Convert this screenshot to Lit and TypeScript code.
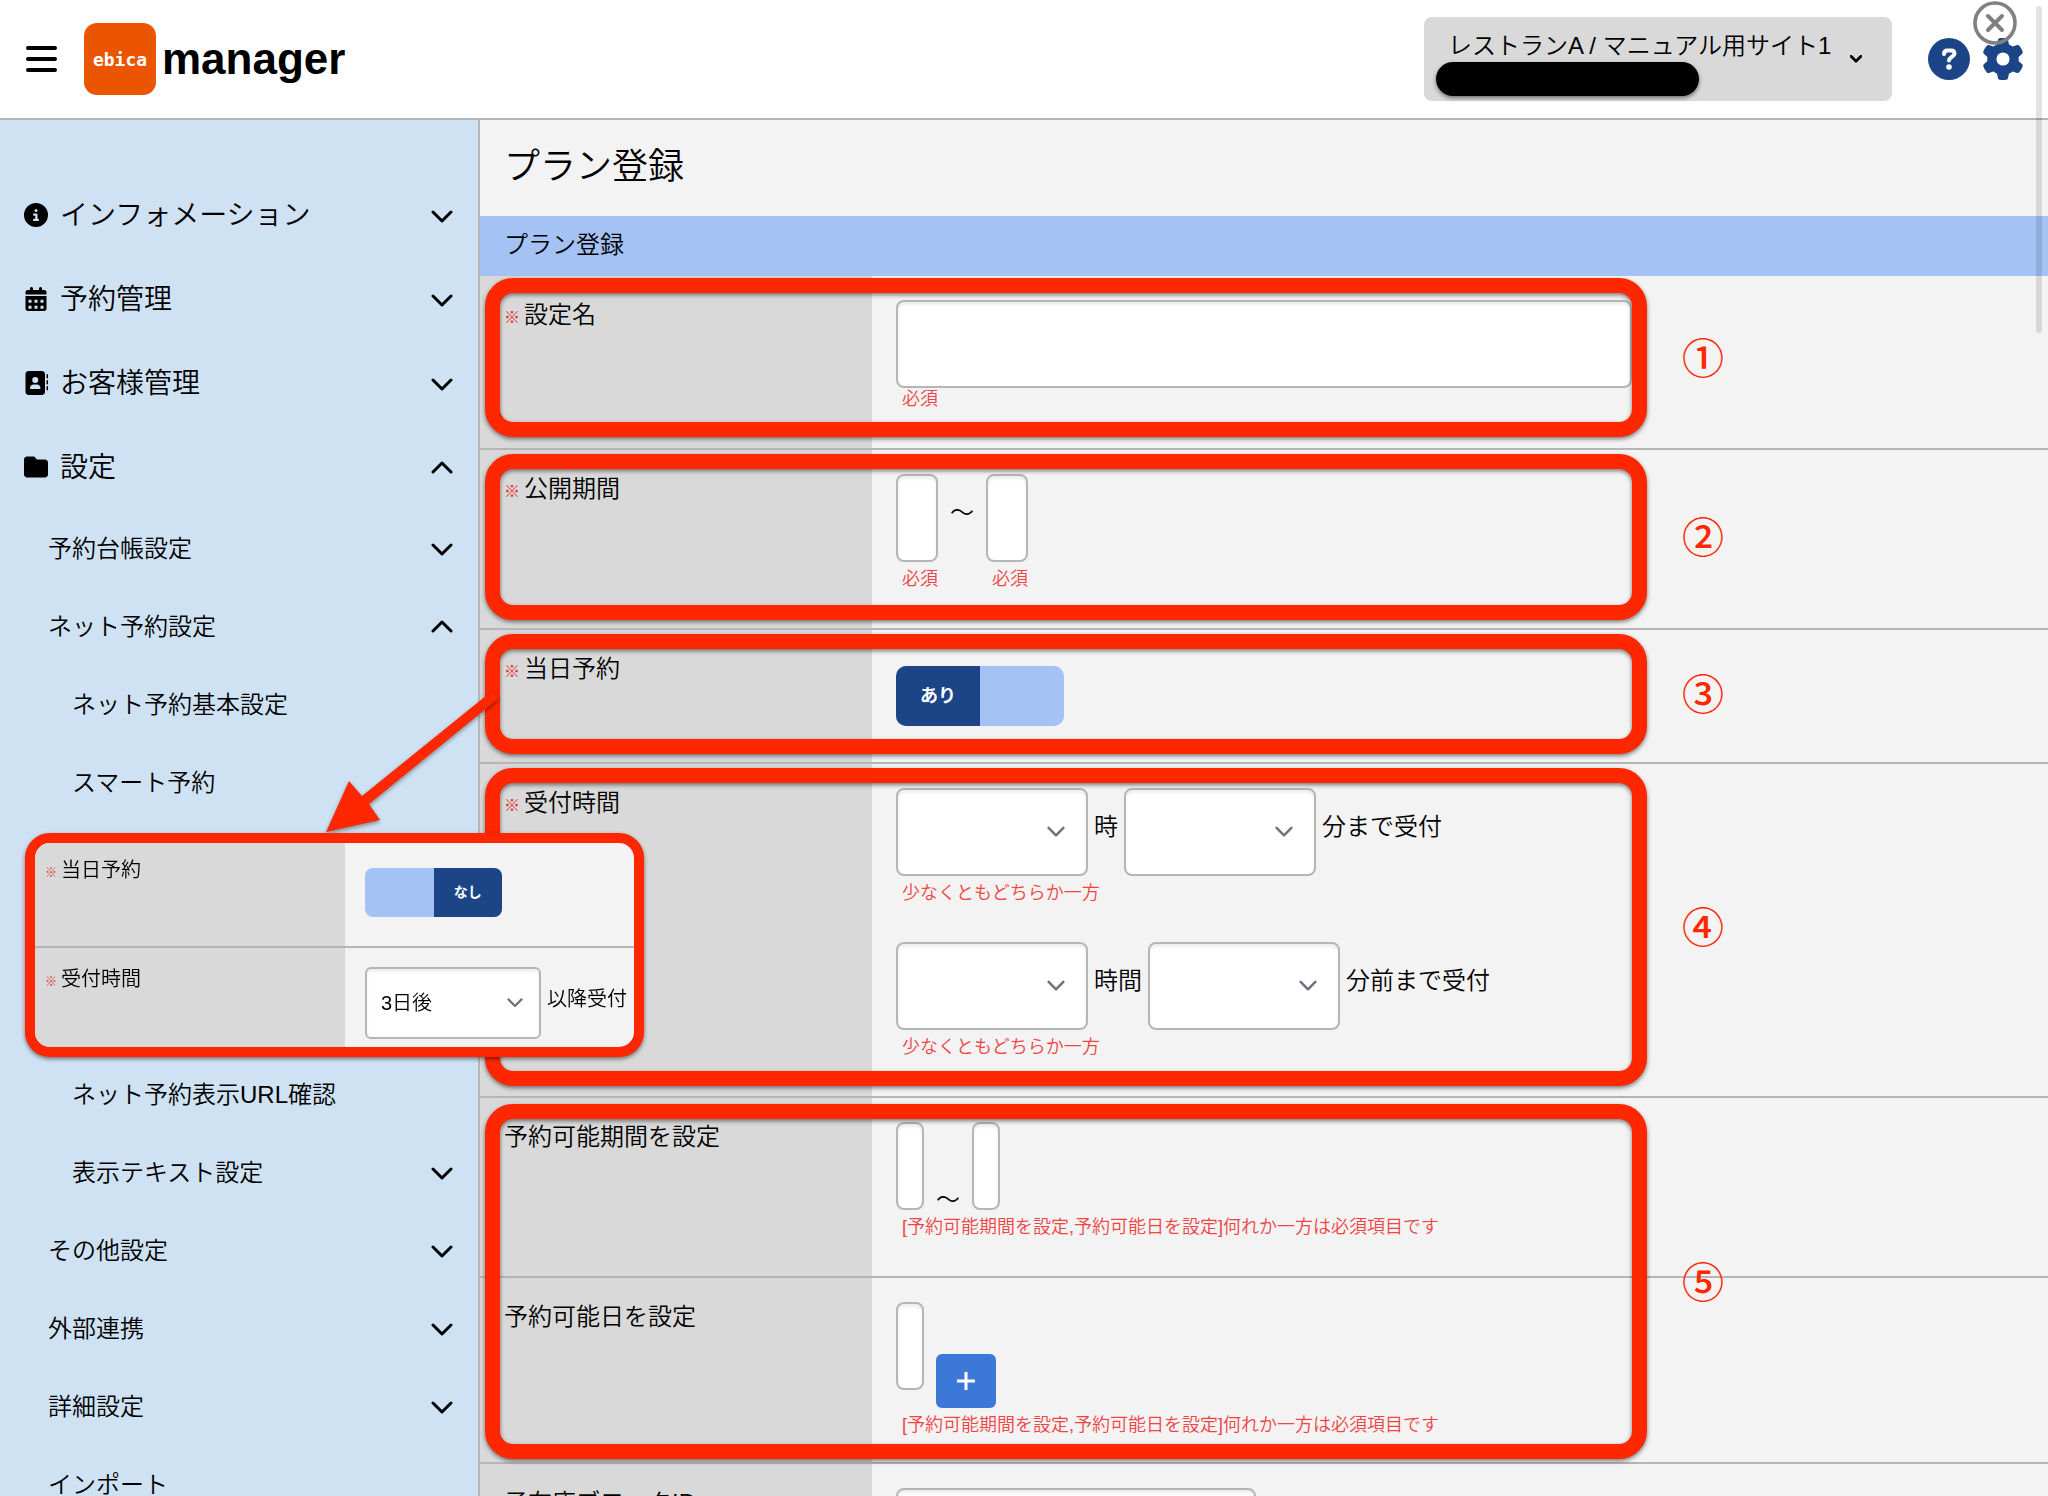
import { LitElement, html, svg, css, nothing, TemplateResult } from "lit";
import { customElement, property } from "lit/decorators.js";
import { classMap } from "lit/directives/class-map.js";

const fontStack = css`"Liberation Sans", "Noto Sans CJK JP", sans-serif`;

const glyphs: Record<string, TemplateResult> = {
  info: svg`<path d="M256 512A256 256 0 1 0 256 0a256 256 0 1 0 0 512zM216 336h24V272H216c-13.3 0-24-10.7-24-24s10.7-24 24-24h48c13.3 0 24 10.7 24 24v88h8c13.3 0 24 10.7 24 24s-10.7 24-24 24H216c-13.3 0-24-10.7-24-24s10.7-24 24-24zm40-208a32 32 0 1 1 0 64 32 32 0 1 1 0-64z"/>`,
  calendar: svg`<g transform="translate(32 0)" fill-rule="evenodd"><path d="M128 0c17.700 0 32 14.300 32 32V64H288V32c0-17.700 14.300-32 32-32s32 14.300 32 32V64h48c26.500 0 48 21.500 48 48v48H0V112C0 85.500 21.500 64 48 64H96V32c0-17.700 14.300-32 32-32zM0 192H448V464c0 26.500-21.500 48-48 48H48c-26.500 0-48-21.500-48-48zM64 272v64h64v-64zM192 272v64h64v-64zM320 272v64h64v-64zM64 400v64h64v-64zM192 400v64h64v-64zM320 400v64h64v-64z"/></g>`,
  contacts: svg`<path d="M96 0C60.700 0 32 28.700 32 64V448c0 35.300 28.700 64 64 64H384c35.300 0 64-28.700 64-64V64c0-35.300-28.700-64-64-64H96zM208 288h64c44.200 0 80 35.800 80 80c0 8.800-7.200 16-16 16H144c-8.800 0-16-7.200-16-16c0-44.200 35.800-80 80-80zm-32-96a64 64 0 1 1 128 0 64 64 0 1 1-128 0zM512 80c0-8.800-7.200-16-16-16s-16 7.200-16 16v64c0 8.800 7.200 16 16 16s16-7.200 16-16V80zM496 192c-8.800 0-16 7.200-16 16v64c0 8.800 7.200 16 16 16s16-7.200 16-16V208c0-8.800-7.200-16-16-16zm16 144c0-8.800-7.200-16-16-16s-16 7.200-16 16v64c0 8.800 7.200 16 16 16s16-7.200 16-16V336z"/>`,
  folder: svg`<path d="M64 480H448c35.300 0 64-28.700 64-64V160c0-35.300-28.700-64-64-64H288c-10.100 0-19.600-4.700-25.600-12.800L243.200 57.600C231.100 41.500 212.100 32 192 32H64C28.700 32 0 60.700 0 96V416c0 35.300 28.700 64 64 64z"/>`,
  gear: svg`<path d="M495.9 166.6c3.2 8.7 .5 18.4-6.4 24.6l-43.3 39.4c1.1 8.3 1.7 16.8 1.7 25.4s-.6 17.1-1.7 25.4l43.3 39.4c6.9 6.2 9.6 15.9 6.4 24.6c-4.4 11.9-9.7 23.3-15.8 34.3l-4.7 8.1c-6.6 11-14 21.4-22.1 31.2c-5.9 7.2-15.7 9.6-24.5 6.8l-55.7-17.7c-13.4 10.3-28.2 18.9-44 25.4l-12.5 57.1c-2 9.1-9 16.3-18.2 17.8c-13.8 2.3-28 3.5-42.5 3.5s-28.7-1.2-42.5-3.5c-9.2-1.5-16.2-8.7-18.2-17.8l-12.5-57.1c-15.8-6.5-30.6-15.1-44-25.4L83.1 425.900c-8.8 2.8-18.6 .3-24.5-6.8c-8.1-9.8-15.5-20.2-22.1-31.2l-4.7-8.1c-6.1-11-11.4-22.4-15.8-34.3c-3.2-8.7-.5-18.4 6.4-24.6l43.3-39.4C64.6 273.1 64 264.6 64 256s.6-17.1 1.7-25.4L22.400 191.200c-6.9-6.2-9.6-15.9-6.4-24.6c4.4-11.9 9.7-23.3 15.8-34.3l4.7-8.1c6.6-11 14-21.400 22.1-31.200c5.9-7.200 15.7-9.600 24.5-6.800l55.7 17.700c13.4-10.300 28.200-18.900 44-25.400l12.5-57.100c2-9.100 9-16.300 18.2-17.800C227.300 1.200 241.500 0 256 0s28.700 1.200 42.500 3.500c9.200 1.500 16.200 8.700 18.200 17.800l12.500 57.100c15.800 6.500 30.600 15.100 44 25.400l55.700-17.700c8.800-2.800 18.600-.3 24.500 6.800c8.100 9.800 15.500 20.200 22.100 31.200l4.700 8.100c6.100 11 11.400 22.400 15.800 34.300zM256 336a80 80 0 1 0 0-160 80 80 0 1 0 0 160z"/>`,
};

const icon = (name: string) =>
  html`<svg class="icon" viewBox="0 0 512 512" aria-hidden="true">${glyphs[name]}</svg>`;

const chevron = (up = false) => html`<svg class=${classMap({ chevron: true, up })} viewBox="0 0 22 14" aria-hidden="true">
  <path d=${up ? "M2 12 L11 3 L20 12" : "M2 2 L11 11 L20 2"} fill="none" stroke="currentColor" stroke-width="3" stroke-linecap="round" stroke-linejoin="round" />
</svg>`;

interface NavItem {
  text: string;
  level: 1 | 2 | 3;
  icon?: string;
  open?: boolean;
  leaf?: boolean;
  afterGap?: boolean;
}

const navItems: NavItem[] = [
  { text: "インフォメーション", level: 1, icon: "info" },
  { text: "予約管理", level: 1, icon: "calendar" },
  { text: "お客様管理", level: 1, icon: "contacts" },
  { text: "設定", level: 1, icon: "folder", open: true },
  { text: "予約台帳設定", level: 2 },
  { text: "ネット予約設定", level: 2, open: true },
  { text: "ネット予約基本設定", level: 3, leaf: true },
  { text: "スマート予約", level: 3, leaf: true },
  { text: "ネット予約表示URL確認", level: 3, leaf: true, afterGap: true },
  { text: "表示テキスト設定", level: 3 },
  { text: "その他設定", level: 2 },
  { text: "外部連携", level: 2 },
  { text: "詳細設定", level: 2 },
  { text: "インポート", level: 2, leaf: true },
];

const controlStyles = css`
  :host,
  * {
    box-sizing: border-box;
  }
  input,
  select,
  button {
    font: inherit;
    color: inherit;
    margin: 0;
  }
  .select {
    position: relative;
    display: block;
    width: 192px;
    height: 88px;
  }
  .select select,
  .box {
    display: block;
    width: 100%;
    height: 88px;
    padding: 0 16px;
    border: 2px solid #b5b5b5;
    border-radius: 8px;
    background: #fff;
    box-shadow: inset 0 3px 3px rgba(0, 0, 0, 0.07);
    appearance: none;
  }
  .select .chevron {
    position: absolute;
    right: 23px;
    top: 50%;
    width: 18px;
    height: 12px;
    margin-top: -6px;
    color: #6b7280;
    pointer-events: none;
  }
  .switch {
    position: relative;
    display: grid;
    grid-template-columns: 1fr 1fr;
    width: 168px;
    height: 60px;
    border-radius: 10px;
    overflow: hidden;
    background: #a4c2f4;
    color: #fff;
    font-weight: 700;
    font-size: 18px;
  }
  .switch input {
    position: absolute;
    inset: 0;
    width: 100%;
    height: 100%;
    opacity: 0;
  }
  .half {
    display: flex;
    align-items: center;
    justify-content: center;
    padding-bottom: 4px;
  }
  .half.active {
    background: #1c4587;
  }
  .mark {
    color: #e02b2b;
    font-size: 16px;
    font-weight: 500;
    margin-right: 4px;
  }
`;

/** Left navigation tree. */
@customElement("side-nav")
export class SideNav extends LitElement {
  static styles = css`
    :host,
    * {
      box-sizing: border-box;
    }
    :host {
      display: block;
      background: #cfe2f3;
      border-right: 2px solid #b5b5b5;
      overflow: hidden;
      padding-top: 53px;
      font-family: ${fontStack};
      color: #000;
    }
    ul {
      list-style: none;
      margin: 0;
      padding: 0;
    }
    .item {
      display: flex;
      align-items: center;
      width: 100%;
      height: 78px;
      padding: 0 25px 0 48px;
      font-size: 24px;
      font-weight: 350;
      color: inherit;
      text-decoration: none;
    }
    .level1 {
      height: 84px;
      padding-left: 24px;
      font-size: 28px;
    }
    .level3 {
      padding-left: 72px;
    }
    .after-gap {
      margin-top: 234px;
    }
    .text {
      flex: 1;
      padding-bottom: 4px;
      white-space: nowrap;
    }
    .icon {
      width: 24px;
      height: 24px;
      margin-right: 12px;
    }
    .chevron {
      width: 22px;
      height: 14px;
      margin-top: 4px;
    }
    .chevron.up {
      margin-top: 0;
    }
  `;

  render() {
    return html`<nav>
      <ul>
        ${navItems.map(
          (n) => html`<li class=${classMap({ "after-gap": !!n.afterGap })}>
            <a class="item level${n.level}" href="#">
              ${n.icon ? icon(n.icon) : nothing}
              <span class="text">${n.text}</span>
              ${n.leaf ? nothing : chevron(n.open)}
            </a>
          </li>`
        )}
      </ul>
    </nav>`;
  }
}

/** Site header with the logo, the site picker and the tools. */
@customElement("top-bar")
export class TopBar extends LitElement {
  static styles = [
    controlStyles,
    css`
      :host {
        display: flex;
        align-items: center;
        height: 120px;
        flex: none;
        padding: 0 24px;
        border-bottom: 2px solid #b5b5b5;
        background: #fff;
        font-family: ${fontStack};
        color: #000;
      }
      button {
        border: 0;
        background: none;
        padding: 0;
      }
      .menu {
        width: 34px;
        height: 28px;
      }
      .menu svg,
      .tool svg {
        display: block;
        width: 100%;
        height: 100%;
      }
      .logo {
        display: flex;
        align-items: center;
        justify-content: center;
        width: 72px;
        height: 72px;
        margin-left: 26px;
        border-radius: 13px;
        background: #eb5500;
        color: #fff;
        font-family: "DejaVu Sans Mono", monospace;
        font-size: 18px;
        font-weight: 700;
      }
      .brand {
        margin-left: 6px;
        font-size: 44px;
        font-weight: 700;
      }
      .site {
        position: relative;
        display: flex;
        align-items: center;
        justify-content: space-between;
        width: 468px;
        height: 84px;
        margin-left: auto;
        padding: 0 30px 0 24px;
        border-radius: 8px;
        background: #d9d9d9;
        font-size: 24px;
        font-weight: 350;
      }
      .names {
        align-self: flex-start;
        line-height: 30px;
        margin-top: 14px;
        white-space: nowrap;
      }
      .masked {
        position: absolute;
        left: 12px;
        bottom: 5px;
        width: 263px;
        height: 34px;
        border-radius: 17px;
        background: #000;
        box-shadow: 0 2px 4px rgba(0, 0, 0, 0.5);
      }
      .site .chevron {
        width: 12px;
        height: 8px;
        stroke: currentColor;
      }
      .site .chevron path {
        stroke-width: 5;
      }
      .tool {
        width: 42px;
        height: 42px;
        margin-left: 36px;
        color: #1c4587;
      }
      .tool + .tool {
        margin-left: 12px;
      }
      .tool .icon {
        fill: currentColor;
      }
      .close {
        position: absolute;
        top: 1px;
        right: 31px;
        width: 44px;
        height: 44px;
      }
    `,
  ];

  render() {
    return html`
      <button class="menu" aria-label="メニュー">
        <svg viewBox="0 0 34 28" stroke="#000" stroke-width="4" stroke-linecap="round">
          <path d="M4 3H31M4 14H31M4 25H31" />
        </svg>
      </button>
      <span class="logo">ebica</span>
      <span class="brand">manager</span>
      <button class="site">
        <span class="names">レストランA / マニュアル用サイト1</span>
        ${chevron()}
        <span class="masked"></span>
      </button>
      <button class="tool" aria-label="ヘルプ">
        <svg viewBox="0 0 42 42">
          <circle cx="21" cy="21" r="21" fill="currentColor" />
          <path d="M16 16C16 13.500 17.500 12.500 19.500 12.500H23C25.500 12.500 26.500 14 26.500 15.700C26.500 18.500 21 19.500 21 22.500" fill="none" stroke="#fff" stroke-width="4" stroke-linecap="round" stroke-linejoin="round" />
          <circle cx="21" cy="29" r="2.800" fill="#fff" />
        </svg>
      </button>
      <button class="tool" aria-label="設定">${icon("gear")}</button>
      <button class="close" aria-label="閉じる">
        <svg viewBox="0 0 44 44" fill="none" stroke="#808080" stroke-linecap="round">
          <circle cx="22" cy="22" r="20" stroke-width="3.600" />
          <path d="M15 15L29 29M29 15L15 29" stroke-width="4" />
        </svg>
      </button>
    `;
  }
}

/** Numbered frame that outlines one or more form rows. */
@customElement("note-frame")
export class NoteFrame extends LitElement {
  @property() label = "";

  static styles = css`
    :host {
      display: flex;
      align-items: center;
      gap: 35px;
      position: absolute;
      left: 5px;
      pointer-events: none;
    }
    .frame {
      align-self: stretch;
      box-sizing: border-box;
      width: 1162px;
      border: 15px solid #ff2700;
      border-radius: 28px;
      filter: drop-shadow(0 2px 2px rgba(0, 0, 0, 0.5));
    }
    .number {
      line-height: 40px;
      padding-bottom: 4px;
      font-family: "Noto Sans CJK JP", sans-serif;
      font-weight: 500;
      font-size: 42px;
      color: #ff2700;
    }
  `;

  render() {
    return html`<div class="frame"></div>
      <span class="number">${this.label}</span>`;
  }
}

/** Plan registration form. */
@customElement("plan-form")
export class PlanForm extends LitElement {
  static styles = [
    controlStyles,
    css`
      :host {
        display: block;
        background: #f3f3f3;
        overflow: auto;
        scrollbar-width: none;
        min-width: 0;
        font-family: ${fontStack};
        font-size: 24px;
        font-weight: 350;
        color: #000;
      }
      h1,
      h2 {
        margin: 0;
        padding: 0 24px;
        font-weight: 350;
      }
      h1 {
        font-size: 36px;
        line-height: 94px;
        padding-bottom: 2px;
      }
      h2 {
        font-size: 24px;
        line-height: 58px;
        padding-bottom: 2px;
        background: #a4c2f4;
      }
      .group {
        position: relative;
      }
      .row {
        display: grid;
        grid-template-columns: 25% 1fr;
        border-bottom: 2px solid #b5b5b5;
      }
      .name {
        padding: 24px 24px 0;
        line-height: 30px;
        background: #d9d9d9;
      }
      .body {
        padding: 24px 24px 38px;
      }
      .body.toggle {
        padding: 36px 24px;
      }
      .body.days {
        padding-bottom: 26px;
      }
      .line {
        display: flex;
        gap: 6px;
      }
      .line.range {
        gap: 12px;
      }
      .line.bottom {
        align-items: flex-end;
      }
      .sep {
        line-height: 78px;
        white-space: nowrap;
      }
      .bottom .sep {
        line-height: 20px;
      }
      .hint {
        margin: 6px 0 0;
        padding-left: 6px;
        font-size: 18px;
        line-height: 22px;
        color: #ef4444;
        white-space: nowrap;
      }
      .hint.tight {
        margin-top: 0;
      }
      .long {
        max-width: 736px;
      }
      .medium {
        max-width: 360px;
      }
      .date {
        width: 42px;
      }
      .narrow {
        width: 28px;
        padding: 0;
      }
      .second {
        margin-top: 38px;
      }
      .add {
        display: flex;
        align-items: center;
        justify-content: center;
        width: 60px;
        height: 54px;
        margin-top: 52px;
        border: 0;
        border-radius: 6px;
        background: #3c78d8;
      }
      .add svg {
        width: 20px;
        height: 20px;
      }
      .frame1 {
        top: 2px;
        bottom: 13px;
      }
      .frame2,
      .frame3 {
        top: 4px;
        bottom: 10px;
      }
      .frame4 {
        top: 4px;
        bottom: 12px;
      }
      .frame5 {
        top: 6px;
        bottom: 5px;
      }
    `,
  ];

  private select(id: string, label: string) {
    return html`<span class="select">
      <select id=${id} aria-label=${label}><option></option></select>
      ${chevron()}
    </span>`;
  }

  render() {
    const mark = html`<span class="mark">※</span>`;
    const either = html`<p class="hint">少なくともどちらか一方</p>`;
    const dates = html`<p class="hint">[予約可能期間を設定,予約可能日を設定]何れか一方は必須項目です</p>`;
    return html`
      <h1>プラン登録</h1>
      <h2>プラン登録</h2>
      <form>
        <div class="group">
          <div class="row">
            <div class="name">${mark}<label for="name">設定名</label></div>
            <div class="body">
              <input class="box long" id="name" type="text" />
              <p class="hint tight">必須</p>
            </div>
          </div>
          <note-frame class="frame1" label="①"></note-frame>
        </div>
        <div class="group">
          <div class="row">
            <div class="name">${mark}<label for="open-from">公開期間</label></div>
            <div class="body">
              <div class="line range">
                <div class="date">
                  <input class="box" id="open-from" type="text" />
                  <p class="hint">必須</p>
                </div>
                <span class="sep">〜</span>
                <div class="date">
                  <input class="box" type="text" aria-label="公開期間 終了" />
                  <p class="hint">必須</p>
                </div>
              </div>
            </div>
          </div>
          <note-frame class="frame2" label="②"></note-frame>
        </div>
        <div class="group">
          <div class="row">
            <div class="name">${mark}<label for="same-day">当日予約</label></div>
            <div class="body toggle">
              <div class="switch">
                <span class="half active">あり</span><span class="half"></span>
                <input id="same-day" type="checkbox" role="switch" checked />
              </div>
            </div>
          </div>
          <note-frame class="frame3" label="③"></note-frame>
        </div>
        <div class="group">
          <div class="row">
            <div class="name">${mark}<label for="hour">受付時間</label></div>
            <div class="body">
              <div class="line">
                ${this.select("hour", "時")}<span class="sep">時</span>
                ${this.select("minute", "分")}<span class="sep">分まで受付</span>
              </div>
              ${either}
              <div class="line second">
                ${this.select("hours-before", "時間")}<span class="sep">時間</span>
                ${this.select("minutes-before", "分前")}<span class="sep">分前まで受付</span>
              </div>
              ${either}
            </div>
          </div>
          <note-frame class="frame4" label="④"></note-frame>
        </div>
        <div class="group">
          <div class="row">
            <div class="name"><label for="period-from">予約可能期間を設定</label></div>
            <div class="body">
              <div class="line range bottom">
                <input class="box narrow" id="period-from" type="text" />
                <span class="sep">〜</span>
                <input class="box narrow" type="text" aria-label="予約可能期間 終了" />
              </div>
              ${dates}
            </div>
          </div>
          <div class="row">
            <div class="name"><label for="day">予約可能日を設定</label></div>
            <div class="body days">
              <div class="line range">
                <input class="box narrow" id="day" type="text" />
                <button class="add" type="button" aria-label="追加">
                  <svg viewBox="0 0 20 20" stroke="#fff" stroke-width="3"><path d="M10 1V19M1 10H19" /></svg>
                </button>
              </div>
              ${dates}
            </div>
          </div>
          <note-frame class="frame5" label="⑤"></note-frame>
        </div>
        <div class="row">
          <div class="name"><label for="block">子在庫ブロックID</label></div>
          <div class="body"><input class="box medium" id="block" type="text" /></div>
        </div>
      </form>
    `;
  }
}

/** Detail window showing the form with same-day booking switched off. */
@customElement("detail-window")
export class DetailWindow extends LitElement {
  static styles = [
    controlStyles,
    css`
      :host {
        display: block;
        width: 619px;
        border: 10px solid #ff2700;
        border-radius: 25px;
        overflow: hidden;
        background: #f3f3f3;
        box-shadow: 0 2px 4px rgba(0, 0, 0, 0.5);
        font-family: ${fontStack};
        font-size: 20px;
        font-weight: 350;
        color: #000;
      }
      .row {
        display: grid;
        grid-template-columns: 310px 1fr;
        height: 99px;
      }
      .row.first {
        height: 105px;
        border-bottom: 2px solid #b5b5b5;
      }
      .name {
        padding: 19px 10px 0;
        line-height: 24px;
        background: #d9d9d9;
      }
      .first .name {
        padding-top: 15px;
      }
      .body {
        display: flex;
        align-items: flex-start;
        gap: 6px;
        padding: 19px 0 0 20px;
      }
      .first .body {
        padding-top: 25px;
      }
      .mark {
        font-size: 12px;
      }
      .switch {
        width: 137px;
        height: 49px;
        border-radius: 8px;
        font-size: 14px;
      }
      .select {
        width: 176px;
        height: 72px;
      }
      .select select {
        height: 72px;
        padding: 0 14px;
        border-radius: 6px;
      }
      .select .chevron {
        right: 18px;
        width: 16px;
      }
      .after {
        line-height: 64px;
        white-space: nowrap;
      }
    `,
  ];

  render() {
    return html`
      <div class="row first">
        <div class="name"><span class="mark">※</span><label for="off">当日予約</label></div>
        <div class="body">
          <div class="switch">
            <span class="half"></span><span class="half active">なし</span>
            <input id="off" type="checkbox" role="switch" />
          </div>
        </div>
      </div>
      <div class="row">
        <div class="name"><span class="mark">※</span><label for="after">受付時間</label></div>
        <div class="body">
          <span class="select">
            <select id="after"><option>3日後</option></select>
            ${chevron()}
          </span>
          <span class="after">以降受付</span>
        </div>
      </div>
    `;
  }
}

@customElement("app-root")
export class AppRoot extends LitElement {
  static styles = css`
    :host {
      position: relative;
      display: flex;
      flex-direction: column;
      height: 100vh;
      overflow: hidden;
    }
    .columns {
      display: grid;
      grid-template-columns: 480px 1fr;
      flex: 1;
      min-height: 0;
    }
    .arrow {
      position: absolute;
      left: 316px;
      top: 680px;
      width: 190px;
      height: 160px;
      filter: drop-shadow(0 2px 2px rgba(0, 0, 0, 0.4));
    }
    .detail {
      position: absolute;
      left: 25px;
      top: 833px;
    }
    .thumb {
      position: absolute;
      top: 6px;
      right: 6px;
      width: 6px;
      height: 327px;
      border-radius: 3px;
      background: rgba(0, 0, 0, 0.11);
    }
  `;

  render() {
    return html`
      <top-bar></top-bar>
      <div class="columns">
        <side-nav></side-nav>
        <plan-form></plan-form>
      </div>
      <svg class="arrow" viewBox="0 0 190 160" aria-hidden="true">
        <path d="M10 152L33 101L46 116L176 11L183 18L53 124L64 140Z" fill="#ff2700" />
      </svg>
      <detail-window class="detail"></detail-window>
      <div class="thumb"></div>
    `;
  }
}
